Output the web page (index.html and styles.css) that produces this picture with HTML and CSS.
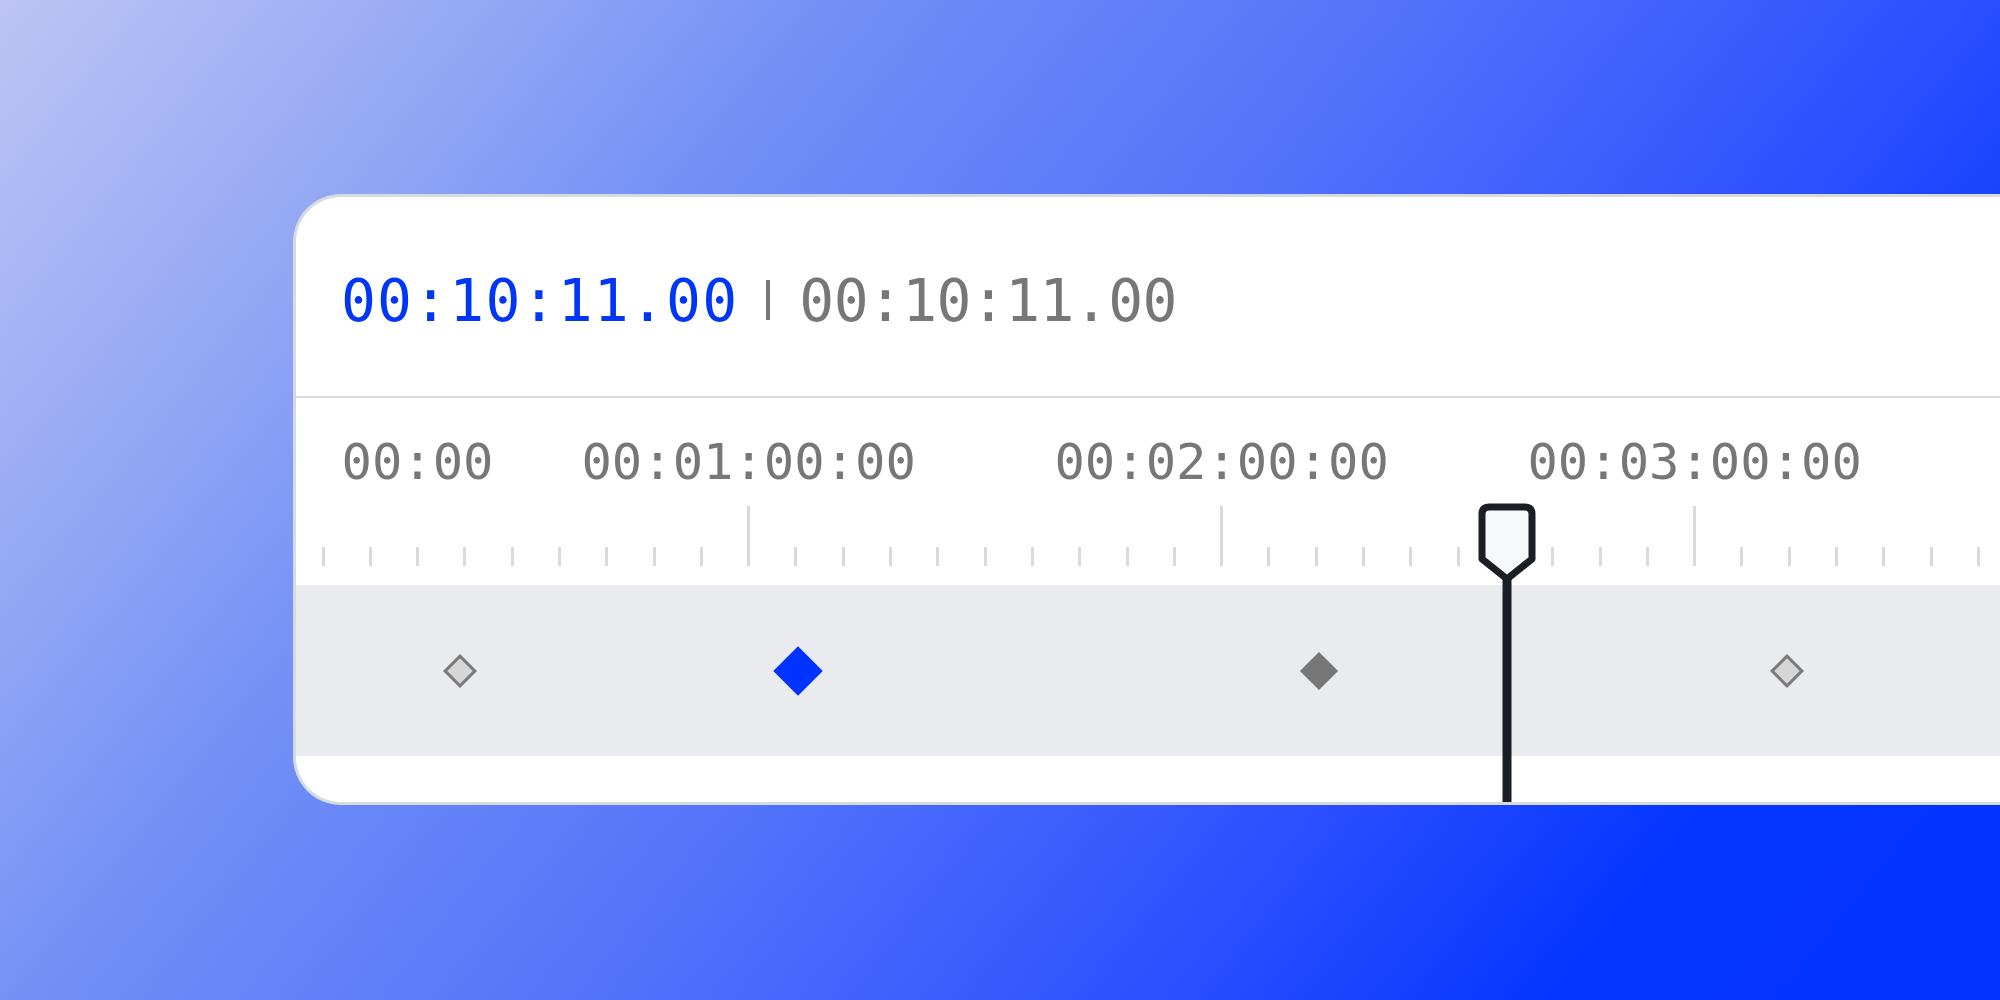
FILE: index.html
```html
<!DOCTYPE html>
<html lang="en">
<head>
    <meta charset="UTF-8">
    <meta name="viewport" content="width=device-width, initial-scale=1.0">
    <title>Timeline</title>
    <link rel="stylesheet" href="styles.css">
</head>

<body>
    <div class="stage">
        <div class="timeline">
            <div class="timecode">
                <span class="current">00:10:11.00</span>
                <span class="sep"></span>
                <span class="total">00:10:11.00</span>
            </div>

            <div class="ruler">
                <div class="labels">
                    <span class="start">00:00</span>
                    <span class="mark">00:01:00:00</span>
                    <span class="mark">00:02:00:00</span>
                    <span class="mark">00:03:00:00</span>
                </div>
                <div class="ticks">
                    <i></i><i></i><i></i><i></i><i></i><i></i><i></i><i></i><i></i><i class="major"></i>
                    <i></i><i></i><i></i><i></i><i></i><i></i><i></i><i></i><i></i><i class="major"></i>
                    <i></i><i></i><i></i><i></i><i></i><i></i><i></i><i></i><i></i><i class="major"></i>
                    <i></i><i></i><i></i><i></i><i></i><i></i>
                </div>
            </div>

            <div class="track">
                <span class="key outline" style="left: 164px"></span>
                <span class="key active" style="left: 502px"></span>
                <span class="key solid" style="left: 1023px"></span>
                <span class="key outline" style="left: 1491px"></span>
            </div>
            <div class="track-foot"></div>

            <svg class="playhead" width="60" height="302" viewBox="0 0 60 302">
                <rect x="25.5" y="74" width="9" height="228" fill="#1b1e25" />
                <path d="M30 79 L5 59 V14 Q5 7 12 7 H48 Q55 7 55 14 V59 Z"
                      fill="#f7f8fa" stroke="#1b1e25" stroke-width="7" stroke-linejoin="round" />
            </svg>
        </div>
    </div>
</body>

</html>
```

FILE: styles.css
```css
body {
    margin: 0;
    width: 2000px;
    height: 1000px;
    overflow: hidden;
    background: linear-gradient(129deg, #bcc5f4 0%, #8ea3f5 20%, #7290f6 30%, #4f70fb 52%, #2a4dff 71%, #0436ff 84%, #0033ff 100%);
    font-family: 'DejaVu Sans Mono', 'Liberation Mono', monospace;
}

.stage {
    padding: 194px 0 0 293px;
}

.timeline {
    position: relative;
    width: 1800px;
    background: #fff;
    border: 3px solid #d6dbde;
    border-right: none;
    border-radius: 48px 0 0 48px;
    overflow: hidden;
}

/* header with the current / total time */
.timecode {
    box-sizing: border-box;
    height: 201px;
    padding: 70px 0 0 45px;
    border-bottom: 2px solid #dcdcdc;
    display: flex;
    align-items: flex-start;
    font-size: 58px;
    line-height: 68px;
}

.timecode .current {
    color: #0036f5;
    letter-spacing: 1.2px;
}

.timecode .sep {
    width: 4px;
    height: 40px;
    margin: 13px 29px 0 28px;
    background: #777;
}

.timecode .total {
    color: #777;
    letter-spacing: -0.6px;
}

/* ruler */
.ruler {
    height: 187px;
    box-sizing: border-box;
    padding-top: 34px;
}

.labels {
    display: flex;
    padding-left: 45.5px;
    font-size: 50.5px;
    line-height: 59px;
    color: #777;
    white-space: nowrap;
}

.labels .start {
    width: 170.7px;
}

.labels .mark {
    flex: 0 0 473px;
    text-align: center;
}

.ticks {
    display: flex;
    align-items: flex-end;
    gap: 44.3px;
    height: 60px;
    margin-top: 15px;
    padding-left: 25.5px;
}

.ticks i {
    flex: 0 0 3px;
    height: 19px;
    background: #dadada;
}

.ticks i.major {
    height: 60px;
}

/* keyframe track */
.track {
    position: relative;
    height: 171px;
    background: #e9ebee;
}

.track-foot {
    height: 46px;
}

.key {
    position: absolute;
    top: 50%;
    box-sizing: border-box;
    transform: translate(-50%, -50%) rotate(45deg);
}

.key.outline {
    width: 24px;
    height: 24px;
    background: #d6d6d6;
    border: 3px solid #7a7a7a;
}

.key.active {
    width: 35px;
    height: 35px;
    background: #0033ff;
}

.key.solid {
    width: 27px;
    height: 27px;
    background: #777;
}

.playhead {
    position: absolute;
    left: 1181px;
    top: 303px;
    display: block;
}
```
